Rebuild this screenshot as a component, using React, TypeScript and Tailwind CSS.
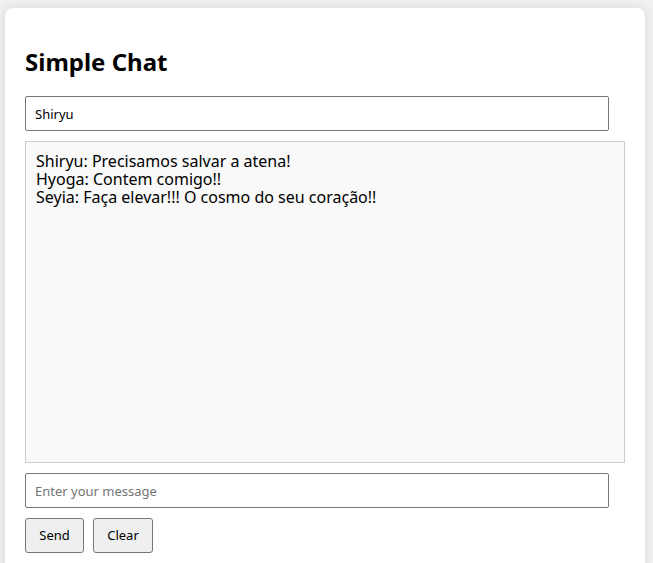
export default function App() {
  return (
    <div className="min-h-[563px] bg-[#f0f0f0] pt-[8px] pl-[5px] [font-family:'Liberation_Sans',Arial,sans-serif] text-black">
      <div className="w-[640px] rounded-[8px] bg-white p-[20px] shadow-[0_0_10px_rgba(0,0,0,0.1)]">
        <h1 className="my-[20px] text-[24px] font-bold leading-[28px]">Simple Chat</h1>
        <input
          defaultValue="Shiryu"
          className="block h-[35px] w-[584px] rounded-[2px] border border-[#767676] px-[9px] text-[13px] outline-none"
        />
        <div className="mt-[10px] h-[322px] w-[600px] border border-[#cccccc] bg-[#f9f9f9] px-[10px] pt-[10px] text-[16px] leading-[18px]">
          <div>Shiryu: Precisamos salvar a atena!</div>
          <div>Hyoga: Contem comigo!!</div>
          <div>Seyia: Faça elevar!!! O cosmo do seu coração!!</div>
        </div>
        <input
          placeholder="Enter your message"
          className="mt-[10px] block h-[35px] w-[584px] rounded-[2px] border border-[#767676] px-[9px] text-[13px] outline-none placeholder:text-[#757575]"
        />
        <div className="mt-[10px] flex gap-[9px]">
          <button className="h-[35px] w-[59px] rounded-[3px] border border-[#767676] bg-[#efefef] text-[13px]">Send</button>
          <button className="h-[35px] w-[60px] rounded-[3px] border border-[#767676] bg-[#efefef] text-[13px]">Clear</button>
        </div>
      </div>
    </div>
  );
}
